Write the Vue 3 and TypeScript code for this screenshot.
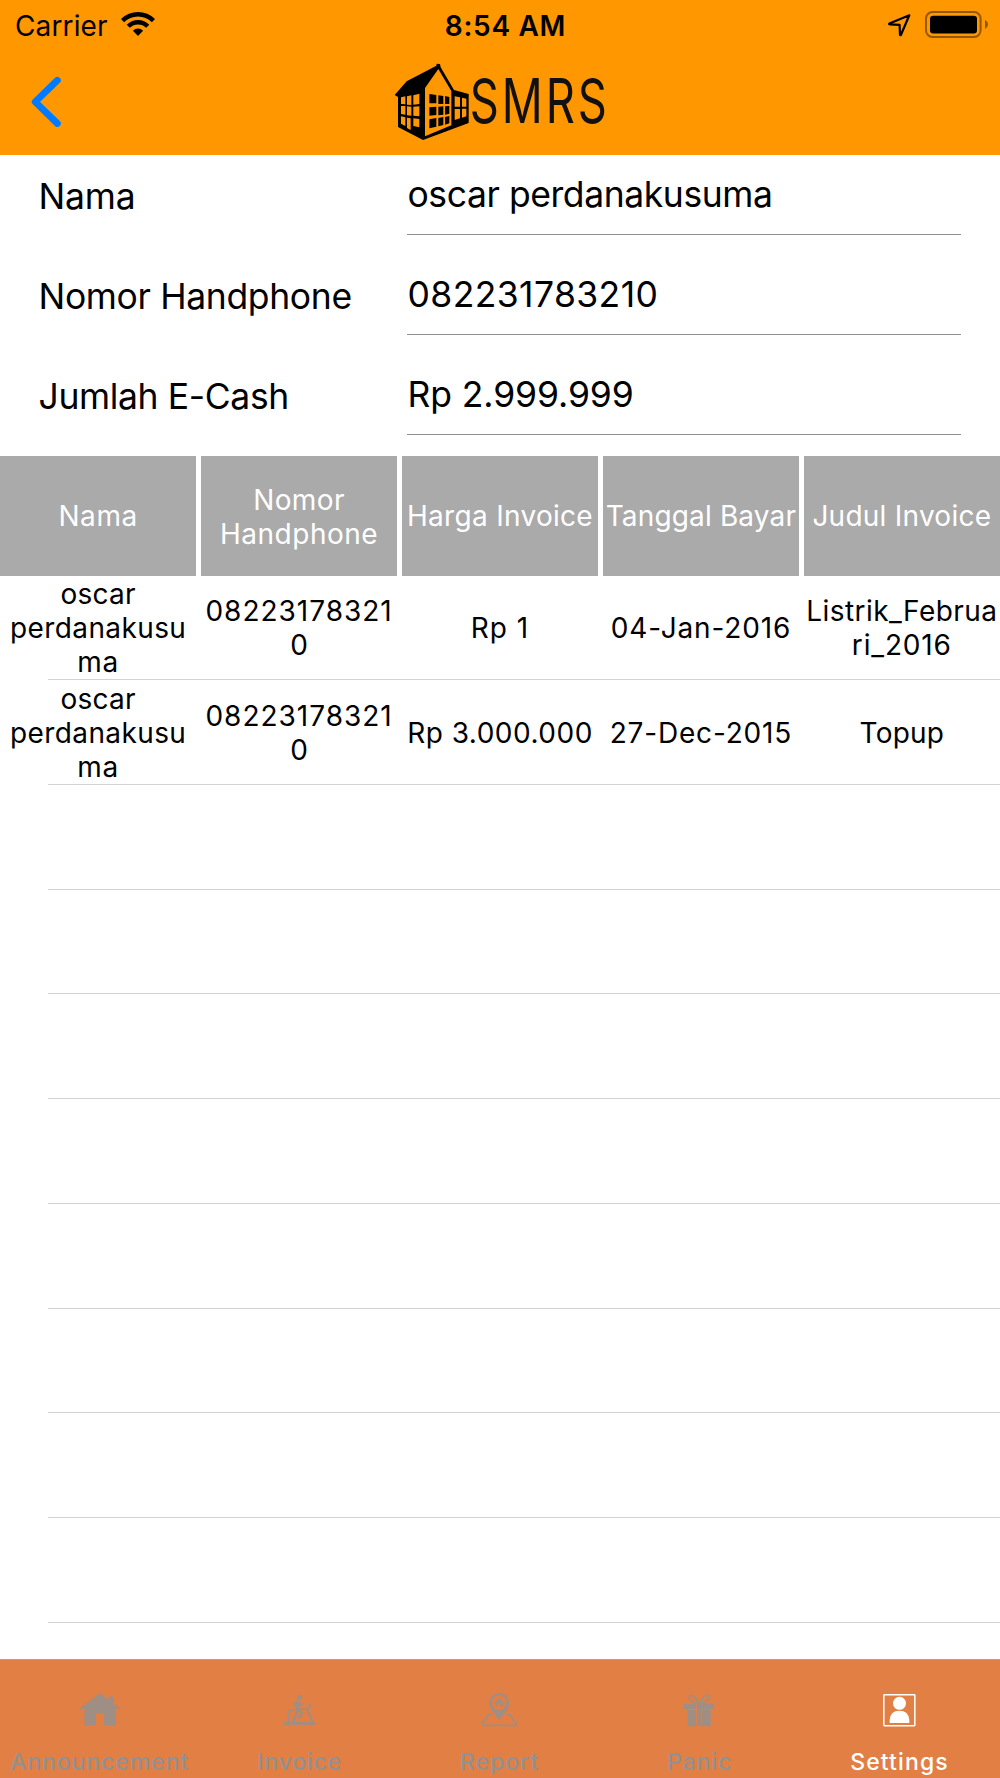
<script setup lang="ts">
interface Line { text: string; spacing: number }
interface Tab { name: string; spacing: number; icon: string; active?: boolean }

const line = (text: string, spacing: number): Line => ({ text, spacing })

const fields: { label: Line; value: Line }[] = [
  { label: line('Nama', -0.2), value: line('oscar perdanakusuma', -0.42) },
  { label: line('Nomor Handphone', -0.35), value: line('082231783210', 0.4) },
  { label: line('Jumlah E-Cash', -0.36), value: line('Rp 2.999.999', -0.1) },
]

const columns: Line[][] = [
  [line('Nama', 0.6)],
  [line('Nomor', 0.4), line('Handphone', 0.5)],
  [line('Harga Invoice', 0.3)],
  [line('Tanggal Bayar', 0.15)],
  [line('Judul Invoice', 0.25)],
]

const owner = [line('oscar', 0.27), line('perdanakusu', 0.4), line('ma', 0.8)]
const phone = [line('08223178321', 1), line('0', 0)]

const rows: Line[][][] = [
  [owner, phone, [line('Rp 1', 1)], [line('04-Jan-2016', 0.85)], [line('Listrik_Februa', 0.43), line('ri_2016', 0.85)]],
  [owner, phone, [line('Rp 3.000.000', 0.5)], [line('27-Dec-2015', 0.83)], [line('Topup', 0.2)]],
  ...Array.from({ length: 8 }, () => [] as Line[][]),
]

const tabs: Tab[] = [
  { name: 'Announcement', spacing: 0.9, icon: 'home' },
  { name: 'Invoice', spacing: 0.78, icon: 'treadmill' },
  { name: 'Report', spacing: 1, icon: 'pin' },
  { name: 'Panic', spacing: 0.9, icon: 'gift' },
  { name: 'Settings', spacing: 1.1, icon: 'person', active: true },
]

const track = (l: { spacing: number }) => ({ letterSpacing: `${l.spacing}px` })
</script>

<template>
  <div class="screen">
    <header class="header">
      <div class="status">
        <div class="status-left">
          <span class="carrier">Carrier</span>
          <svg class="wifi" width="36" height="26" viewBox="0 0 36 26">
            <path d="M18 25 L12.9 19.7 A7.2 7.2 0 0 1 23.1 19.7 Z" />
            <path d="M6.7 13.7 A16 16 0 0 1 29.3 13.7 L26.2 16.8 A11.6 11.6 0 0 0 9.8 16.8 Z" />
            <path d="M1 8 A24 24 0 0 1 35 8 L31.9 11.2 A19.6 19.6 0 0 0 4.1 11.2 Z" />
          </svg>
        </div>
        <span class="clock">8:54 AM</span>
        <div class="status-right">
          <svg width="26" height="26" viewBox="0 0 26 26" fill="none" stroke="#000" stroke-width="2.2" stroke-linejoin="round">
            <path d="M22.3 3.3 L2.4 11.5 Q1.6 12.2 2.6 12.3 L12.6 12.8 L13 22.6 Q13.3 23.6 14 22.7 Z" />
          </svg>
          <svg width="64" height="28" viewBox="0 0 64 28">
            <rect x="1" y="1.1" width="54.6" height="24.8" rx="6.4" fill="none" stroke="#000" stroke-opacity=".42" stroke-width="2" />
            <rect x="5" y="4.8" width="47" height="17.6" rx="3.2" />
            <path d="M60 8.8 Q63 10.5 63 13.5 Q63 16.5 60 18.2 Z" fill-opacity=".42" />
          </svg>
        </div>
      </div>
      <div class="nav">
        <svg class="back" width="36" height="56" viewBox="0 0 36 56" fill="none" stroke="#007aff" stroke-width="6.8" stroke-linecap="round" stroke-linejoin="round">
          <path d="M29.4 6.3 L7.2 27.9 L29.4 49.5" />
        </svg>
        <svg class="logo" width="220" height="90" viewBox="0 0 660 270">
          <path d="M14 120 L50 79 L139 32 L140 26 L150 27 L152 37 L192 105 L236 117 V204 L99 255 L24 216 V126 Z" />
          <path fill="#ff9800" d="M145 42 L184 108 V211 L105 244 V99 Z" />
          <g fill="#ff9800">
            <path d="M33 127 L46 124 V148 L33 147 Z M51 124 L64 121 V150 L51 149 Z M70 121 L88 116 V147 L70 149 Z" />
            <path d="M33 153 L46 153 V179 L33 177 Z M51 154 L64 155 V182 L51 181 Z M70 155 L88 154 V184 L70 182 Z" />
            <path d="M33 184 L46 187 V213 L33 206 Z M51 188 L62 190 V225 L51 219 Z M70 190 L88 192 V217 L70 213 Z" />
            <path d="M194 124 L210 127 V155 L194 155 Z M216 128 L229 131 V155 L216 155 Z" />
            <path d="M194 162 L210 162 V190 L194 195 Z M216 161 L229 161 V184 L216 188 Z" />
          </g>
          <path d="M118 117 L139 120 V145 L118 145 Z M145 121 L160 123 V147 L145 147 Z M165 123 L178 126 V147 L165 147 Z" />
          <path d="M118 157 L139 155 V180 L118 182 Z M145 155 L160 154 V179 L145 181 Z M165 154 L178 153 V176 L165 179 Z" />
          <path d="M118 193 L139 189 V215 L118 220 Z M145 189 L160 186 V210 L145 214 Z M165 186 L178 183 V205 L165 209 Z" />
          <text class="brand" transform="translate(239 204) scale(.74 1)">SMRS</text>
        </svg>
      </div>
    </header>

    <section class="form">
      <div v-for="f in fields" :key="f.label.text" class="field">
        <label class="field-label" :style="track(f.label)">{{ f.label.text }}</label>
        <div class="field-value" :style="track(f.value)">{{ f.value.text }}</div>
      </div>
    </section>

    <section class="table">
      <div class="cells head">
        <div v-for="(c, i) in columns" :key="i" class="cell" :class="{ double: c.length === 2 }">
          <span v-for="l in c" :key="l.text" :style="track(l)">{{ l.text }}</span>
        </div>
      </div>
      <div v-for="(r, i) in rows" :key="i" class="row">
        <div class="cells">
          <div v-for="(c, j) in r" :key="j" class="cell">
            <span v-for="l in c" :key="l.text" :style="track(l)">{{ l.text }}</span>
          </div>
        </div>
        <div class="divider"></div>
      </div>
    </section>

    <nav class="tabs">
      <div v-for="t in tabs" :key="t.name" class="tab" :class="{ active: t.active }">
        <svg v-if="t.icon === 'home'" width="48" height="40" viewBox="227 150 144 120" fill="currentColor">
          <path d="M299 160 L325 179 V172 Q333 166 340 172 V191 L361 206 L358 208 L346 203 V257 H311 V222 H287 V257 H252 V204 L240 209 L237 206 Z" />
        </svg>
        <svg v-else-if="t.icon === 'treadmill'" width="48" height="40" viewBox="828 150 144 120" fill="none" stroke="currentColor" stroke-linejoin="round" stroke-linecap="round">
          <circle cx="899" cy="172" r="7.5" fill="currentColor" stroke="none" />
          <path d="M893 186 V205" stroke-width="11" />
          <path d="M889 186 L882 192 L887 199" stroke-width="5" />
          <path d="M898 189 L903 194 L909 192" stroke-width="5" />
          <path d="M892 209 L888 225 L880 242 M895 209 L905 217 L901 228 L896 232" stroke-width="7.5" />
          <path d="M866 246 V216 Q866 209 873 209 H884 M902 208 H919 L923 206 L933 192" stroke-width="4.5" />
          <path d="M923 207 L937 245" stroke-width="6" />
          <path d="M854 250 H944" stroke-width="8" />
          <path d="M864 254 V256 M935 254 V256" stroke-width="6" />
        </svg>
        <svg v-else-if="t.icon === 'pin'" width="48" height="40" viewBox="227 150 144 120" fill="currentColor">
          <path fill-rule="evenodd" d="M296 241 C289 226 267 211 267 189 A29.5 30 0 0 1 326 189 C326 211 304 226 296 241 Z M296 166 A21.5 22.5 0 1 0 296.1 166 Z" />
          <path d="M281 191 L296 175 L312 191 L309 192 V196 L304 199 H300 V191 Q296 187 292 191 V199 H288 L284 196 V192 Z" />
          <path d="M275 224 H264 L246 252 V256 H348 V252 L329 224 H318" fill="none" stroke="currentColor" stroke-width="5" stroke-linejoin="round" />
        </svg>
        <svg v-else-if="t.icon === 'gift'" width="48" height="40" viewBox="828 150 144 120" fill="currentColor">
          <path d="M851 191 H888 V207 H851 Z M906 191 H942 V207 H906 Z M891 188 H904 V259 H891 Z M863 210 H888 V259 H863 Z M907 210 H932 V259 H907 Z" />
          <path d="M896 190 Q889 172 875 166 Q867 165 867 174 Q872 187 896 190 M898 190 Q906 172 919 166 Q927 165 927 174 Q922 187 898 190" fill="none" stroke="currentColor" stroke-width="4.5" />
        </svg>
        <svg v-else width="48" height="40" viewBox="348 150 144 120" fill="currentColor">
          <rect x="371.5" y="164" width="93" height="93" rx="2" fill="none" stroke="currentColor" stroke-width="4.5" />
          <circle cx="418.5" cy="190" r="19.5" />
          <path d="M389 249 V240 Q391 212 418 212 Q446 212 448 240 V249 Z" />
        </svg>
        <span class="tab-label" :style="track(t)">{{ t.name }}</span>
      </div>
    </nav>
  </div>
</template>

<style>
body {
  margin: 0;
  background: #fff;
}
</style>

<style scoped>
.screen {
  display: flex;
  flex-direction: column;
  width: 1000px;
  height: 1778px;
  overflow: hidden;
  background: #fff;
  color: #000;
  font-family: Inter, "Liberation Sans", sans-serif;
  white-space: nowrap;
}
svg {
  display: block;
  flex: none;
  overflow: visible;
}
.header {
  flex: none;
  height: 154.6px;
  background: #ff9800;
}
.status {
  display: grid;
  grid-template-columns: 1fr auto 1fr;
  align-items: center;
  height: 51px;
  padding: 0 11px 0 15px;
  font-size: 28px;
  line-height: 34px;
}
.status-left,
.status-right {
  display: flex;
  align-items: center;
}
.carrier {
  letter-spacing: 0.13px;
}
.wifi {
  margin: -3px 0 0 12px;
}
.clock {
  margin-left: 7px;
  font-weight: 600;
  letter-spacing: 0.7px;
}
.status-right {
  justify-content: flex-end;
  gap: 12px;
  margin-top: -1px;
}
.nav {
  display: flex;
  align-items: flex-start;
  padding-left: 27.5px;
}
.back {
  margin-top: 23px;
}
.logo {
  margin: 4px 0 0 326.5px;
}
.brand {
  font-family: Inter, sans-serif;
  font-size: 184px;
  font-weight: 430;
  letter-spacing: 12px;
  fill: #111;
}
.form {
  display: flex;
  flex: none;
  flex-direction: column;
  gap: 20px;
  height: 301px;
  font-size: 35.5px;
  line-height: 44px;
}
.field {
  display: grid;
  grid-template-columns: 368.5px 554px;
  height: 80px;
  padding-left: 38.5px;
}
.field-label {
  padding-top: 20px;
}
.field-value {
  box-sizing: border-box;
  height: 80px;
  padding: 18px 0 0 0.5px;
  border-bottom: 1px solid #8f8f8f;
}
.table {
  flex: 1;
  min-height: 0;
  font-size: 28px;
  line-height: 34px;
}
.cells {
  display: grid;
  grid-template-columns: repeat(5, minmax(0, 1fr));
  flex: 1;
  column-gap: 4.6px;
}
.cell {
  display: flex;
  flex-direction: column;
  align-items: center;
  justify-content: center;
}
.head {
  height: 120px;
  color: #fff;
}
.head .cell {
  background: #aaa;
}
.double {
  padding-top: 2px;
}
.row {
  display: flex;
  flex-direction: column;
  height: 104.73px;
}
.row .cell {
  padding-top: 1.4px;
}
.divider {
  height: 1px;
  margin-left: 48px;
  background: #d2d1d4;
}
.tabs {
  display: grid;
  grid-template-columns: repeat(5, 1fr);
  flex: none;
  box-sizing: border-box;
  height: 119px;
  border-top: 1px solid #b5a192;
  background: #e17f45;
}
.tab {
  display: flex;
  flex-direction: column;
  align-items: center;
  padding-top: 30px;
  color: #9f8e84;
}
.tab-label {
  margin-top: 18px;
  margin-right: 1px;
  color: #929292;
  font-size: 23px;
  font-weight: 500;
  line-height: 28px;
}
.active,
.active .tab-label {
  color: #fff;
}
</style>
